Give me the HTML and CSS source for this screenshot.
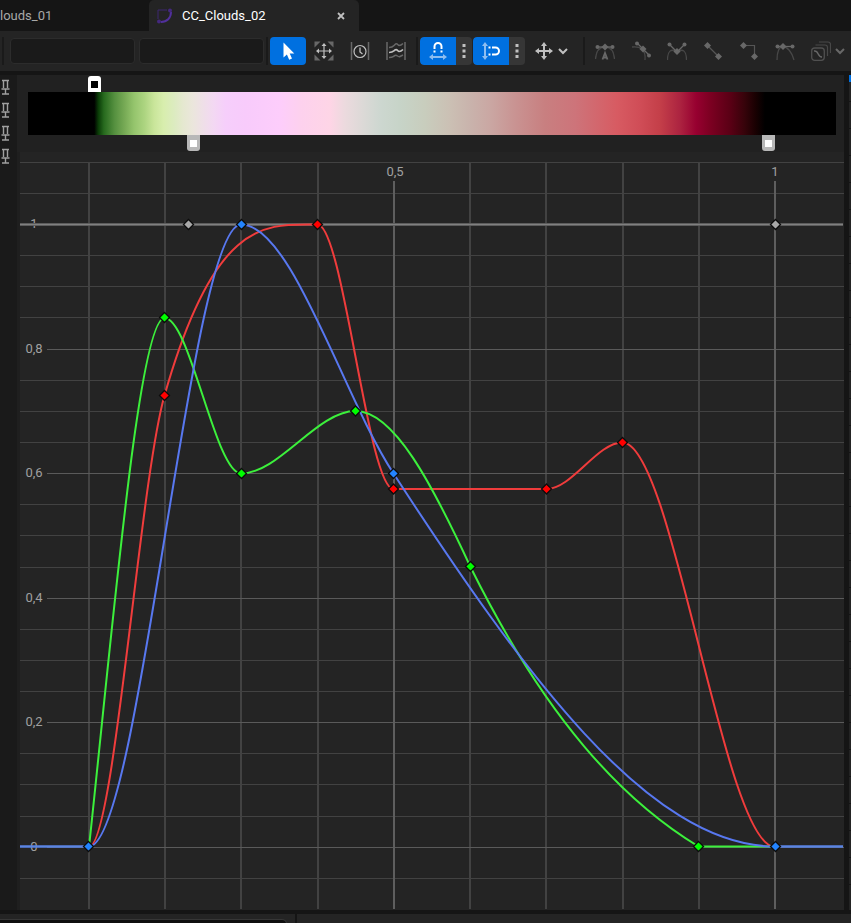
FILE: index.html
```
<!DOCTYPE html>
<html lang="en">
<head>
    <meta charset="UTF-8">
    <meta name="viewport" content="width=device-width, initial-scale=1.0">
    <title>CC_Clouds_02</title>
    <link rel="stylesheet" href="styles.css">
</head>
<body>
    <!-- Shared shapes -->
    <svg class="defs" width="0" height="0" aria-hidden="true">
        <symbol id="pin" viewBox="0 0 10 16">
            <path d="M2 1.500h7M3.500 2v7M7.500 2v7M1.500 10h8M5.500 10v5M2 15h7" fill="none" stroke="currentColor" stroke-width="1.400"/>
        </symbol>
        <symbol id="chevron" viewBox="0 0 12 12">
            <path d="M2 4l4 4 4-4" fill="none" stroke="currentColor" stroke-width="2"/>
        </symbol>
        <symbol id="dots" viewBox="0 0 4 16">
            <path d="M.5 1h3v3h-3zM.5 6.500h3v3h-3zM.5 12h3v3h-3z" fill="currentColor"/>
        </symbol>
        <symbol id="key" viewBox="-6 -6 12 12" overflow="visible">
            <path d="M0-5L5 0 0 5-5 0z" stroke="#0c0c0c" stroke-width="1.300"/>
        </symbol>
    </svg>

    <nav class="tabs">
        <a class="tab tab-first" href="#">louds_01</a>
        <div class="tab tab-active">
            <svg class="tab-icon" width="18" height="18" viewBox="0 0 18 18" aria-hidden="true">
                <path d="M2 12V3h9" fill="none" stroke="#3c2670"/>
                <path d="M15 5c0 6-4 10-10 10" fill="none" stroke="#51309c" stroke-width="2"/>
                <circle cx="14" cy="3.500" r="2" fill="#44287f"/>
                <circle cx="3" cy="14.500" r="2" fill="#44287f"/>
            </svg>
            <a href="#">CC_Clouds_02</a>
            <button class="tab-close" type="button" aria-label="Close tab">
                <svg width="8" height="8" viewBox="0 0 8 8"><path d="M1 1l6 6M7 1L1 7" stroke="currentColor" stroke-width="1.800"/></svg>
            </button>
        </div>
    </nav>

    <div class="toolbar">
        <span class="sep"></span>
        <div class="fields">
            <input class="field" type="text" aria-label="Key time">
            <input class="field" type="text" aria-label="Key value">
        </div>
        <span class="sep"></span>
        <div class="group">
            <button class="tool active" type="button" aria-label="Select">
                <svg width="20" height="20" viewBox="0 0 20 20"><path d="M5.500 1.500v15l3.400-3 2.300 5.200 2.800-1.200-2.300-5h4.600z" fill="#fff"/></svg>
            </button>
            <button class="tool" type="button" aria-label="Transform">
                <svg width="20" height="20" viewBox="0 0 20 20">
                    <path d="M.5.5h6l-6 6zM19.500.5h-6l6 6zM.5 19.500h6l-6-6zM19.500 19.500h-6l6-6z" fill="#686868"/>
                    <path d="M10 4v12M4 10h12" stroke="#c0c0c0" stroke-width="1.200"/>
                    <path d="M10 2l2.500 3h-5zM10 18l2.500-3h-5zM2 10l3-2.500v5zM18 10l-3-2.500v5z" fill="#c0c0c0"/>
                </svg>
            </button>
            <button class="tool" type="button" aria-label="Retime">
                <svg width="20" height="20" viewBox="0 0 20 20" fill="none">
                    <path d="M1.500 1v18M18.500 1v18" stroke="#686868" stroke-width="1.500"/>
                    <circle cx="10" cy="10.500" r="6" stroke="#c0c0c0" stroke-width="1.200"/>
                    <path d="M10 6.500v4.500l2.500 2" stroke="#c0c0c0" stroke-width="1.300"/>
                </svg>
            </button>
            <button class="tool" type="button" aria-label="Multi scale">
                <svg width="20" height="20" viewBox="0 0 20 20" fill="none">
                    <path d="M1 1v18M19 1v18" stroke="#686868" stroke-width="1.500"/>
                    <path d="M3 6.500c4 0 4-1 6-3s3 1 4 1 3-1 4-2M3 16.500c4 0 4-1 6-2s3 2 5 1l3-1.500" stroke="#686868" stroke-width="1.500"/>
                    <path d="M3 11.500c4 0 4-1 6-2.500s3 1.500 4 1.500 3-1 4-2" stroke="#c0c0c0" stroke-width="1.700"/>
                </svg>
            </button>
        </div>
        <span class="sep"></span>
        <div class="group snaps">
            <div class="split">
                <button class="tool active" type="button" aria-label="Snap time">
                    <svg width="20" height="20" viewBox="0 0 20 20" fill="none">
                        <path d="M6.500 8V5.500a3.500 3.500 0 0 1 7 0V8" stroke="#fff" stroke-width="2"/>
                        <path d="M5.500 9.500h2v2h-2zM12.500 9.500h2v2h-2z" fill="#fff"/>
                        <path d="M3 16h14" stroke="#8dbdf0" stroke-width="2"/>
                        <path d="M1 16l4-3v6zM19 16l-4-3v6z" fill="#8dbdf0"/>
                    </svg>
                </button>
                <button class="more" type="button" aria-label="Time snap options"><svg width="4" height="16"><use href="#dots"/></svg></button>
            </div>
            <div class="split">
                <button class="tool active" type="button" aria-label="Snap value">
                    <svg width="20" height="20" viewBox="0 0 20 20" fill="none">
                        <path d="M4 4v12" stroke="#8dbdf0" stroke-width="2"/>
                        <path d="M4 1l3 4H1zM4 19l3-4H1z" fill="#8dbdf0"/>
                        <path d="M11 6.500h3.500a3.500 3.500 0 0 1 0 7H11" stroke="#fff" stroke-width="2"/>
                        <path d="M7.500 5.500h2v2h-2zM7.500 12.500h2v2h-2z" fill="#fff"/>
                    </svg>
                </button>
                <button class="more" type="button" aria-label="Value snap options"><svg width="4" height="16"><use href="#dots"/></svg></button>
            </div>
            <button class="tool dropdown" type="button" aria-label="Axis snapping">
                <svg width="20" height="20" viewBox="0 0 20 20">
                    <path d="M10 4v12M4 10h12" stroke="currentColor" stroke-width="2"/>
                    <path d="M10 1l3 4H7zM10 19l3-4H7zM1 10l4-3v6zM19 10l-4-3v6z" fill="currentColor"/>
                </svg>
                <svg width="12" height="12"><use href="#chevron"/></svg>
            </button>
        </div>
        <span class="sep"></span>
        <div class="group tangents">
            <button class="tool" type="button" aria-label="Cubic auto" disabled>
                <svg width="20" height="20" viewBox="0 0 20 20" fill="none">
                    <path d="M.5 18C1 10 4 6 10 6s9 4 9.500 12" stroke="#484848" stroke-width="1.300"/>
                    <path d="M2 6h16" stroke="currentColor" stroke-width="1.300"/>
                    <circle cx="2.500" cy="6" r="2" fill="currentColor"/><circle cx="17.500" cy="6" r="2" fill="currentColor"/>
                    <path d="M10 2.500L13.500 6 10 9.500 6.500 6z" fill="currentColor"/>
                    <path d="M7.500 18.500L10 12l2.500 6.500M8.300 16.500h3.400" stroke="currentColor" stroke-width="1.800"/>
                </svg>
            </button>
            <button class="tool" type="button" aria-label="Cubic user" disabled>
                <svg width="20" height="20" viewBox="0 0 20 20" fill="none">
                    <path d="M1 6c8-1 14 2 13 13" stroke="#484848" stroke-width="1.300"/>
                    <path d="M6 2l12 12" stroke="currentColor" stroke-width="1.300"/>
                    <circle cx="6" cy="2.500" r="2" fill="currentColor"/><circle cx="18" cy="14.500" r="2" fill="currentColor"/>
                    <path d="M12 4.500L15.500 8 12 11.500 8.500 8z" fill="currentColor"/>
                </svg>
            </button>
            <button class="tool" type="button" aria-label="Cubic break" disabled>
                <svg width="20" height="20" viewBox="0 0 20 20" fill="none">
                    <path d="M.5 19C.5 10 4 7 10 11c6-4 9.500-1 9.500 8" stroke="#484848" stroke-width="1.300"/>
                    <path d="M2.500 3.500L10 11l7.500-7.500" stroke="currentColor" stroke-width="1.300"/>
                    <circle cx="2.500" cy="3.500" r="2" fill="currentColor"/><circle cx="17.500" cy="3.500" r="2" fill="currentColor"/>
                    <path d="M10 7l3.500 3.500L10 14l-3.500-3.500z" fill="currentColor"/>
                </svg>
            </button>
            <button class="tool" type="button" aria-label="Linear" disabled>
                <svg width="20" height="20" viewBox="0 0 20 20">
                    <path d="M4.500 4.500l11 11" stroke="#555" stroke-width="1.200"/>
                    <path d="M4.500 1L8 4.500 4.500 8 1 4.500zM15.500 12l3.500 3.500-3.500 3.500-3.500-3.500z" fill="currentColor"/>
                </svg>
            </button>
            <button class="tool" type="button" aria-label="Constant" disabled>
                <svg width="20" height="20" viewBox="0 0 20 20" fill="none">
                    <path d="M4.500 4.500h11v11" stroke="#555" stroke-width="1.200"/>
                    <path d="M4.500 1L8 4.500 4.500 8 1 4.500zM15.500 12l3.500 3.500-3.500 3.500-3.500-3.500z" fill="currentColor"/>
                </svg>
            </button>
            <button class="tool" type="button" aria-label="Weighted tangents" disabled>
                <svg width="20" height="20" viewBox="0 0 20 20" fill="none">
                    <path d="M2 19C2 11 4 5.500 8 5.500S17 11 19 19" stroke="#484848" stroke-width="1.300"/>
                    <path d="M2 5.500h16" stroke="currentColor" stroke-width="1.300"/>
                    <circle cx="2.500" cy="5.500" r="2" fill="currentColor"/><circle cx="17.500" cy="5.500" r="2" fill="currentColor"/>
                    <path d="M8 2l3.500 3.500L8 9 4.500 5.500z" fill="currentColor"/>
                </svg>
            </button>
            <button class="tool dropdown" type="button" aria-label="Extrapolation" disabled>
                <svg width="20" height="20" viewBox="0 0 20 20" fill="none">
                    <rect x=".7" y="7" width="12.600" height="12.300" rx="3" stroke="#505050" stroke-width="1.300"/>
                    <path d="M3 10c5-1 3 6 8 6" stroke="currentColor" stroke-width="1.500"/>
                    <path d="M4.500 4H14q2.500 0 2.500 2.500V15M8 1h9q2.500 0 2.500 2.500V12" stroke="#484848" stroke-width="1.200"/>
                </svg>
                <svg width="12" height="12"><use href="#chevron"/></svg>
            </button>
        </div>
    </div>

    <main class="editor">
        <aside class="pins">
            <button type="button" aria-label="Pin red curve"><svg width="10" height="16"><use href="#pin"/></svg></button>
            <button type="button" aria-label="Pin green curve"><svg width="10" height="16"><use href="#pin"/></svg></button>
            <button type="button" aria-label="Pin blue curve"><svg width="10" height="16"><use href="#pin"/></svg></button>
            <button type="button" aria-label="Pin alpha curve"><svg width="10" height="16"><use href="#pin"/></svg></button>
        </aside>

        <section class="canvas">
            <div class="gradient">
                <div class="gradient-bar"></div>
                <button class="stop stop-alpha" type="button" aria-label="Color stop" style="left: 8.2%"></button>
                <button class="stop stop-color" type="button" aria-label="Opacity stop" style="left: 20.4%"></button>
                <button class="stop stop-color" type="button" aria-label="Opacity stop" style="left: 91.6%"></button>
            </div>

            <svg class="chart" viewBox="17 152 827 758" role="img" aria-label="Color curves">
                <rect x="17" y="152" width="3" height="758" fill="#1f1f1f"/>
                <!-- Grid -->
                <path class="grid-minor" d="M20 162.500H844M20 193.500H844M20 255.500H844M20 286.500H844M20 317.500H844M20 380.500H844M20 411.500H844M20 442.500H844M20 504.500H844M20 535.500H844M20 567.500H844M20 629.500H844M20 660.500H844M20 691.500H844M20 753.500H844M20 784.500H844M20 816.500H844M20 878.500H844"/>
                <path class="grid-time" d="M89 162V909M165 162V909M241 162V909M318 162V909M470 162V909M546 162V909M623 162V909M699 162V909"/>
                <path class="grid-major" d="M47 349.500H844M47 473.500H844M47 598.500H844M47 722.500H844M47 847.500H844"/>
                <path class="grid-time-major" d="M394 181V909M775 181V909"/>

                <!-- Axis labels -->
                <g class="labels">
                    <text x="395" y="176">0,5</text>
                    <text x="775" y="176">1</text>
                    <text x="34" y="228">1</text>
                    <text x="34" y="353">0,8</text>
                    <text x="34" y="477">0,6</text>
                    <text x="34" y="602">0,4</text>
                    <text x="34" y="726">0,2</text>
                    <text x="34" y="851">0</text>
                </g>

                <!-- Curves -->
                <path class="alpha-glow" d="M20 224.500H843"/>
                <path class="curve alpha" d="M20 224.500H843"/>
                <path class="curve red" d="M89 847C114 847 139.300 484 164.500 395.500C215.500 216 266.500 224.500 317.500 224.500C343 224.500 368 489 393.500 489H546.500C572 489 597 442.500 622.500 442.500C673 442.500 724 847 775 847"/>
                <path class="curve green" d="M89 847C114 615 139.300 318 164.500 318C190 318 215.500 473.500 241 473.500C279 473.500 317 411 355.500 411C394 411 432 484 470.500 567C546 719 622 800 698.500 846.500H775"/>
                <path class="curve blue" d="M20 846.500H89C139.700 846.500 190.300 224.500 241 224.500C291.800 224.500 342.700 396 393.500 473.500C520.500 669 648 846.500 775 846.500H843"/>
                <path class="curve blue-flat" d="M20 846.500H89M775 846.500H843"/>

                <!-- Keys -->
                <g fill="#a8a8a8">
                    <use href="#key" x="182.500" y="218.500" width="12" height="12"/>
                    <use href="#key" x="769.500" y="218.500" width="12" height="12"/>
                </g>
                <g fill="#ff0000">
                    <use href="#key" x="158.500" y="389.500" width="12" height="12"/>
                    <use href="#key" x="311.500" y="218.500" width="12" height="12"/>
                    <use href="#key" x="387.500" y="483" width="12" height="12"/>
                    <use href="#key" x="540.500" y="483" width="12" height="12"/>
                    <use href="#key" x="616.500" y="436.500" width="12" height="12"/>
                </g>
                <g fill="#00ff00">
                    <use href="#key" x="158.500" y="311.500" width="12" height="12"/>
                    <use href="#key" x="235.500" y="467.500" width="12" height="12"/>
                    <use href="#key" x="349.500" y="405" width="12" height="12"/>
                    <use href="#key" x="464.500" y="560.500" width="12" height="12"/>
                    <use href="#key" x="692.500" y="840.500" width="12" height="12"/>
                </g>
                <g fill="#2384ff">
                    <use href="#key" x="82.500" y="840.500" width="12" height="12"/>
                    <use href="#key" x="235.500" y="218.500" width="12" height="12"/>
                    <use href="#key" x="387.500" y="467.500" width="12" height="12"/>
                    <use href="#key" x="769.500" y="840.500" width="12" height="12"/>
                </g>
            </svg>
        </section>

        <aside class="details"></aside>
    </main>

    <footer class="dock">
        <div class="dock-left">
            <input class="dock-search" type="text" aria-label="Search">
        </div>
        <div class="dock-right"></div>
    </footer>
</body>
</html>
```

FILE: styles.css
```
* {
    box-sizing: border-box;
}

body {
    margin: 0;
    height: 100vh;
    display: flex;
    flex-direction: column;
    overflow: hidden;
    background-color: #151515;
    color: #c0c0c0;
    font-family: Roboto, "Liberation Sans", sans-serif;
    font-size: 13px;
}

a {
    color: inherit;
    text-decoration: none;
}

button {
    margin: 0;
    padding: 0;
    border: none;
    background: none;
    color: inherit;
    font: inherit;
    cursor: pointer;
}

svg {
    flex: none;
}

.defs {
    position: absolute;
}

/* Tabs */
.tabs {
    display: flex;
    flex: none;
    height: 31px;
}

.tab {
    display: flex;
    align-items: center;
}

.tab-first {
    width: 149px;
    color: #a8a8a8;
}

.tab-active {
    width: 210px;
    padding: 0 14px 0 7px;
    gap: 8px;
    border-radius: 5px 5px 0 0;
    background-color: #242424;
    color: #fff;
}

.tab-close {
    display: flex;
    margin-left: auto;
    color: #c0c0c0;
}

/* Toolbar */
.toolbar {
    display: flex;
    align-items: center;
    flex: none;
    height: 40px;
    padding-left: 2px;
    overflow: hidden;
    background-color: #242424;
}

.sep {
    flex: none;
    width: 2px;
    height: 28px;
    background-color: #1a1a1a;
}

.fields {
    display: flex;
    gap: 4px;
    margin: 0 2px 0 6px;
}

.field {
    width: 125px;
    height: 26px;
    padding: 0 8px;
    border: 1px solid #2c2c2c;
    border-radius: 4px;
    background-color: #1a1a1a;
    color: #c0c0c0;
    font: inherit;
}

.group {
    display: flex;
    flex: none;
    margin: 0 2px;
}

.snaps {
    gap: 1px;
}

.split {
    display: flex;
    border-radius: 4px;
    overflow: hidden;
    background-color: #363636;
}

.tool {
    display: flex;
    align-items: center;
    justify-content: center;
    width: 36px;
    height: 28px;
    border-radius: 4px;
}

.tool.active {
    background-color: #0070e0;
}

.split .tool {
    border-radius: 4px 0 0 4px;
}

.more {
    display: flex;
    align-items: center;
    justify-content: center;
    width: 16px;
}

.tool.dropdown {
    width: 55px;
    padding-left: 8px;
    gap: 3px;
    justify-content: flex-start;
}

.tangents {
    color: #686868;
}

/* Editor */
.editor {
    display: flex;
    align-items: stretch;
    flex: none;
    margin: 4px 0;
}

.pins {
    display: flex;
    flex-direction: column;
    flex: none;
    width: 17px;
    background-color: #1a1a1a;
    color: #a0a0a0;
}

.pins button {
    display: flex;
    align-items: center;
    height: 23px;
}

.canvas {
    flex: 1;
    min-width: 0;
    background-color: #242424;
}

.gradient {
    position: relative;
    height: 77px;
    padding-top: 17px;
    border: solid #212121;
    border-width: 0 8px 0 11px;
    background-color: #212121;
}

.gradient-bar {
    height: 43px;
    background: linear-gradient(to right,
        #000 8.2%, #0a3c07 8.7%, #276a1e 9.4%, #55903f 10.7%,
        #78ab56 12%, #94c46c 13.1%, #acd480 14.4%, #c9e59a 15.6%,
        #d8eeae 16.8%, #dcebc0 18.1%, #e5e8d0 19.2%, #ebe6dc 20.4%,
        #efdfe8 21.7%, #f3d8f3 23%, #f6cefb 24.5%, #f8cbfb 27%,
        #fdcdfb 31.2%, #fdd1ee 33.7%, #fed5e6 37.4%, #ecdade 39.2%,
        #dad9d6 41.7%, #cdd7d0 43.6%, #c7d4c8 46%, #c8cdbd 49.1%,
        #cbc0b4 52.2%, #c9b3ac 54.7%, #caa7a3 57.2%, #c99392 60.3%,
        #c87f80 64%, #cd747a 67.7%, #d75b62 72.9%, #d04d57 75.7%,
        #c43f49 78.2%, #ac2340 80.7%, #970030 82.7%, #7d0022 84.4%,
        #5a0015 86.9%, #36030a 88.7%, #1a0102 90%, #000 91.2%);
}

.stop {
    position: absolute;
    width: 13px;
    height: 16px;
    margin-left: -6px;
}

.stop::after {
    content: "";
    display: block;
    width: 7px;
    height: 7px;
    margin: 0 auto;
}

.stop-alpha {
    top: 1px;
    border-radius: 3px 3px 0 0;
    background-color: #fff;
}

.stop-alpha::after {
    background-color: #000;
}

.stop-color {
    top: 60px;
    border-radius: 0 0 3px 3px;
    background-color: #b8b8b8;
}

.stop-color::after {
    background-color: #fff;
}

/* Curve chart */
.chart {
    display: block;
    width: 100%;
    height: auto;
}

.chart path {
    fill: none;
}

.grid-minor {
    stroke: #424242;
}

.grid-time {
    stroke: #424242;
    stroke-width: 2;
}

.grid-major {
    stroke: #5a5a5a;
}

.grid-time-major {
    stroke: #5e5e5e;
    stroke-width: 2;
}

.labels {
    fill: #a0a0a0;
    font-size: 13px;
    text-anchor: middle;
}

.curve {
    stroke-width: 2;
}

.alpha-glow {
    stroke: #5c5c5c;
    stroke-width: 3;
}

.curve.alpha {
    stroke: #808080;
    stroke-width: 1;
}

.red {
    stroke: #f03c3c;
}

.green {
    stroke: #3cf03c;
}

.blue {
    stroke: #5878f0;
}

.blue-flat {
    stroke: #5a86e0;
}

.details {
    flex: none;
    width: 2px;
    margin-left: 5px;
    border-top: 7px solid #0070e0;
    background: repeating-linear-gradient(#242424 0 19px, #151515 19px 20px, #242424 20px 27px);
}

/* Bottom dock */
.dock {
    display: flex;
    flex: 1;
    gap: 2px;
    min-height: 9px;
    overflow: hidden;
}

.dock-left {
    width: 295px;
    padding: 5px 8px 0 0;
    background-color: #242424;
}

.dock-right {
    flex: 1;
    background-color: #242424;
}

.dock-search {
    display: block;
    width: 100%;
    height: 26px;
    border: 1px solid #363636;
    border-left: none;
    border-radius: 0 5px 5px 0;
    background-color: #0f0f0f;
    color: #c0c0c0;
}
```
